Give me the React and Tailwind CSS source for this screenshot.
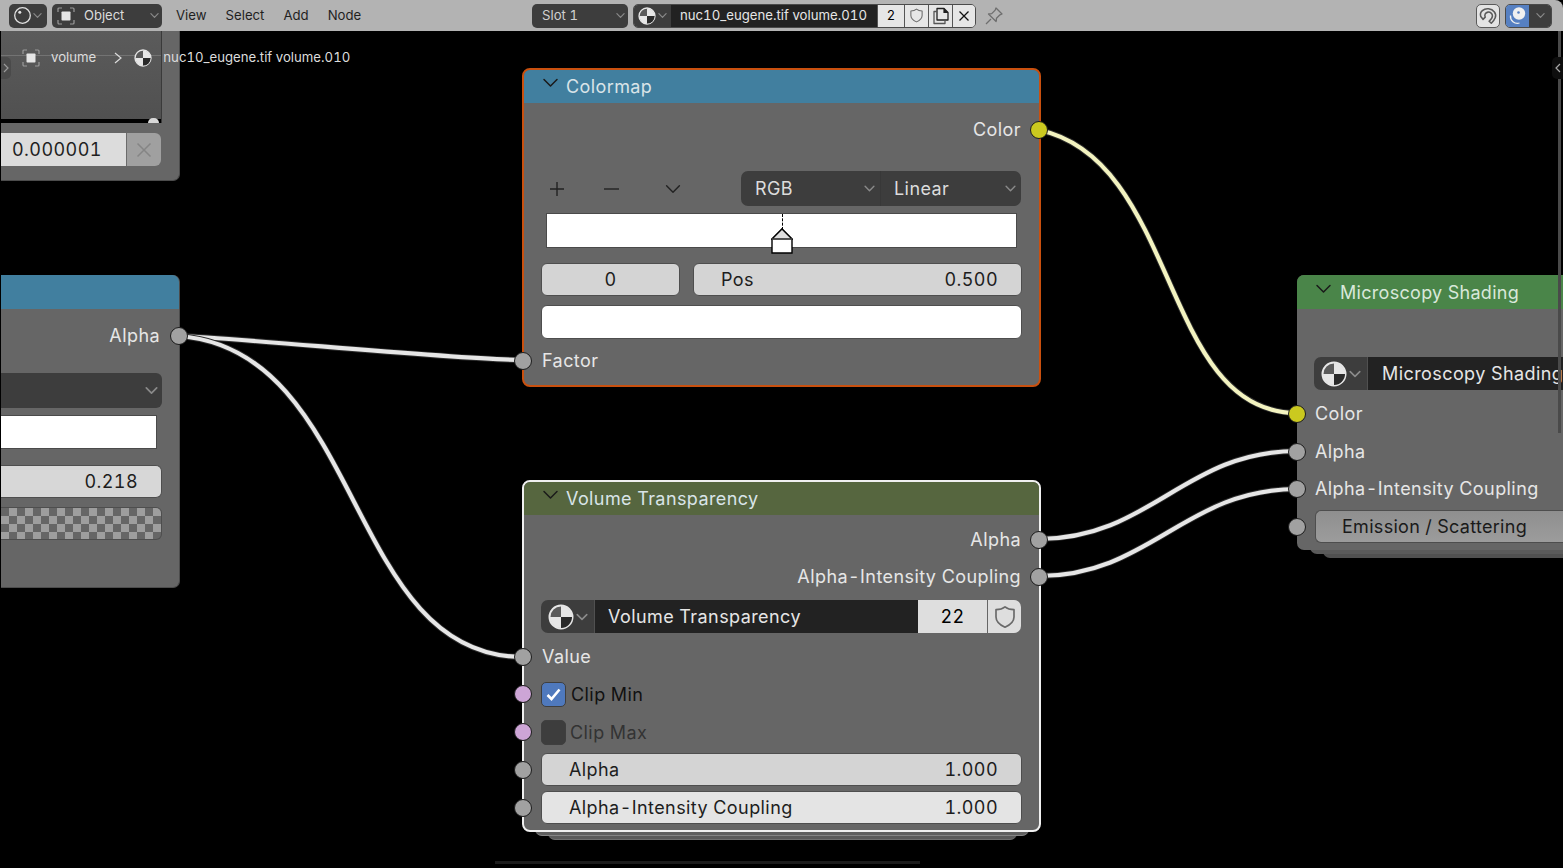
import React from "react";

const font = { fontFamily: "Inter, 'Noto Sans', sans-serif" };

function Chevron({ className = "", size = 10, color = "#8a8a8a", w = 1.3 }) {
  return (
    <svg width={size} height={size} viewBox="0 0 10 10" className={className}>
      <path d="M1 3l4 4 4-4" fill="none" stroke={color} strokeWidth={w} strokeLinecap="round" strokeLinejoin="round" />
    </svg>
  );
}

function MatIcon({ size = 26 }) {
  return (
    <svg width={size} height={size} viewBox="0 0 26 26">
      <circle cx="13" cy="13" r="11.5" fill="#5a5a5a" stroke="#e6e6e6" strokeWidth="2" />
      <path d="M13 13h11A11 11 0 0 1 13 24z" fill="#2a2a2a" />
      <path d="M13 2a11 11 0 0 1 11 11H13z" fill="#e6e6e6" />
      <path d="M13 13v11A11 11 0 0 1 2 13z" fill="#e6e6e6" />
    </svg>
  );
}

function ObjIcon({ size = 18, color = "#e6e6e6", corner = "#9a9a9a" }) {
  return (
    <svg width={size} height={size} viewBox="0 0 18 18">
      <rect x="4.500" y="4.500" width="9" height="9" rx="0.8" fill={color} />
      <path d="M1 5V2a1 1 0 0 1 1-1h3M13 1h3a1 1 0 0 1 1 1v3M17 13v3a1 1 0 0 1-1 1h-3M5 17H2a1 1 0 0 1-1-1v-3" fill="none" stroke={corner} strokeWidth="1.2" />
    </svg>
  );
}

function Shield({ size = 20, color = "#6a6a6a" }) {
  return (
    <svg width={size} height={size} viewBox="0 0 20 20">
      <path d="M10 1.500c2 1.600 4.500 2.300 7.500 2.400v6c0 4-3.200 6.600-7.500 8.600-4.300-2-7.500-4.600-7.500-8.600v-6C5.500 3.800 8 3.100 10 1.500z" fill="none" stroke={color} strokeWidth="1.400" strokeLinejoin="round" />
    </svg>
  );
}

function Socket({ side, color = "#a1a1a1", bordered }) {
  const pos = side === "left" ? (bordered ? "left-[-10px]" : "left-[-9px]") : "right-[-9px]";
  return (
    <span
      className={`absolute ${pos} top-1/2 -translate-y-1/2 w-[18px] h-[18px] rounded-full border-[1.5px] border-[#1c1c1c] z-20`}
      style={{ backgroundColor: color }}
    />
  );
}

function SocketRow({ h, label, side = "left", color, bordered, text = "text-[#e6e6e6]", pl = "pl-[19px]", pr = "pr-[19px]", children }) {
  return (
    <div className={`relative flex items-center ${side === "right" ? `justify-end ${pr}` : pl}`} style={{ height: h }}>
      {side && <Socket side={side} color={color} bordered={bordered} />}
      {children || <span className={`${text} text-[18px] leading-none tracking-[0.42px]`}>{label}</span>}
    </div>
  );
}

function NodeHeader({ title, color, h = "h-[34px]" }) {
  return (
    <div className={`${h} ${color} flex items-center pl-[18px] gap-[7px] rounded-t-[6px] shrink-0`}>
      <svg width="17" height="17" viewBox="0 0 17 17" className="mb-[6px]">
        <path d="M2 4.500l6.500 6.500L15 4.500" fill="none" stroke="#1a1a1a" strokeWidth="1.500" strokeLinecap="round" strokeLinejoin="round" />
      </svg>
      <span className="text-[18px] leading-none text-[#d9e4e8] tracking-[0.4px] whitespace-nowrap">{title}</span>
    </div>
  );
}

function Field({ label, value, className = "", bg = "bg-[#d4d4d4]" }) {
  return (
    <div className={`h-[33px] ${bg} rounded-[6px] border border-[#4e4e4e] flex items-center justify-between pl-[27px] pr-[23px] text-[18px] text-[#1d1d1d] tracking-[0.42px] ${className}`}>
      <span>{label}</span>
      <span>{value}</span>
    </div>
  );
}

function Wires() {
  const wire = (d, col) => (
    <g key={d}>
      <path d={d} fill="none" stroke="#2c2c2c" strokeWidth="6" />
      <path d={d} fill="none" stroke={col} strokeWidth="4.200" />
    </g>
  );
  return (
    <svg className="absolute left-0 top-0 z-0" width="1563" height="868" viewBox="0 0 1563 868">
      {wire("M179 336C 240 338, 460 360, 523 360", "#e6e6e6")}
      {wire("M179 336C 365 350, 345 657, 523 657", "#e6e6e6")}
      {wire("M1039 130C 1180 160, 1160 413, 1297 413", "#f3f3c0")}
      {wire("M1039 539C 1150 539, 1185 451, 1297 451", "#e6e6e6")}
      {wire("M1039 576C 1150 576, 1185 489, 1297 489", "#e6e6e6")}
    </svg>
  );
}

function TopBar() {
  return (
    <header className="relative z-30 h-[31px] bg-[#b3b3b3] flex items-center text-[13px] text-[#1f1f1f] rounded-tr-[8px] pl-[9px]">
      <div className="w-[38px] h-[24px] bg-[#3d3d3d] rounded-[5px] flex items-center pl-[4px] gap-[1px]">
        <svg width="19" height="19" viewBox="0 0 19 19">
          <circle cx="9.500" cy="9.500" r="7.800" fill="none" stroke="#e0e0e0" strokeWidth="1.300" />
          <circle cx="6.800" cy="6.300" r="1.500" fill="#e0e0e0" />
        </svg>
        <Chevron size={9} />
      </div>
      <div className="ml-[5px] w-[110px] h-[24px] bg-[#3d3d3d] rounded-[5px] flex items-center pl-[5px] text-[#dcdcdc]">
        <ObjIcon />
        <span className="ml-[9px] flex-1">Object</span>
        <Chevron size={9} className="mr-[3px]" />
      </div>
      <nav className="ml-[14px] flex gap-[19px] w-[184px] text-[13.200px]">
        <span>View</span>
        <span>Select</span>
        <span>Add</span>
        <span>Node</span>
      </nav>
      <div className="ml-[172px] w-[96px] h-[24px] bg-[#3d3d3d] rounded-[5px] flex items-center pl-[10px] text-[#d0d0d0] text-[13.200px]">
        <span className="flex-1">Slot 1</span>
        <Chevron size={9} className="mr-[3px]" />
      </div>
      <div className="ml-[5px] h-[24px] flex rounded-[5px] overflow-hidden border border-[#4a4a4a]">
        <div className="w-[37px] bg-[#3d3d3d] flex items-center pl-[4px] gap-[2px]">
          <MatIcon size={18} />
          <Chevron size={9} />
        </div>
        <div className="w-[206px] bg-[#222222] text-[#e6e6e6] text-[13.200px] flex items-center pl-[9px] whitespace-nowrap">nuc10_eugene.tif volume.010</div>
        <div className="w-[27px] bg-[#e6e6e6] text-black flex items-center justify-center border-l border-[#555]">2</div>
        <div className="w-[24px] bg-[#e6e6e6] flex items-center justify-center border-l border-[#555]"><Shield size={15} /></div>
        <div className="w-[24px] bg-[#e6e6e6] flex items-center justify-center border-l border-[#555]">
          <svg width="18" height="18" viewBox="0 0 18 18">
            <path d="M5 1.500h7l4 4V13H5z" fill="none" stroke="#1f1f1f" strokeWidth="1.300" strokeLinejoin="round" />
            <path d="M5 4.500H2V16.500H13V13" fill="none" stroke="#555" strokeWidth="1.300" strokeLinejoin="round" />
            <path d="M12 1.500V5.500H16" fill="#1f1f1f" stroke="#1f1f1f" strokeWidth="1.200" />
          </svg>
        </div>
        <div className="w-[23px] bg-[#e6e6e6] flex items-center justify-center border-l border-[#555]">
          <svg width="12" height="12" viewBox="0 0 12 12"><path d="M1.500 1.500l9 9M10.500 1.500l-9 9" stroke="#111" strokeWidth="1.300" /></svg>
        </div>
      </div>
      <div className="ml-[8px] w-[20px] h-[20px] flex items-center justify-center">
        <svg width="20" height="20" viewBox="0 0 20 20">
          <path d="M12 2l6 6-2 .8-3.500 3.500-.4 3.200L8 11.500 4.500 8 7.700 7.600 11.200 4.100z" fill="none" stroke="#6e6e6e" strokeWidth="1.300" strokeLinejoin="round" />
          <path d="M7 13l-5 5" stroke="#6e6e6e" strokeWidth="1.300" />
        </svg>
      </div>
      <div className="ml-auto mr-[11px] flex items-center gap-[5px]">
        <div className="w-[24px] h-[24px] rounded-[5px] bg-[#e3e3e3] border border-[#5a5a5a] flex items-center justify-center">
          <svg width="20" height="20" viewBox="0 0 18 18">
            <path d="M2.500 9.500C1 5 5.500 2 9.500 2.500 14 3 17 7 15.500 10.500c-.8 2-2 3.500-3.500 5l-2-1.800c1.500-1.300 3-3 3-4.700 0-2-1.800-3.800-4-3.500-2.300.3-3.500 2.500-2.500 4.500L4.500 12z" fill="none" stroke="#5a5a5a" strokeWidth="1.400" strokeLinejoin="round" />
          </svg>
        </div>
        <div className="h-[24px] w-[47px] rounded-[5px] overflow-hidden flex border border-[#4a4a4a]">
          <div className="w-[23px] bg-[#5680c2] flex items-center justify-center">
            <svg width="19" height="19" viewBox="0 0 19 19">
              <circle cx="11" cy="7.500" r="6.200" fill="#f0f0f0" />
              <circle cx="10.500" cy="6.500" r="1.300" fill="#5680c2" />
              <path d="M2.500 9.500a7 7 0 0 0 9 7.500" fill="none" stroke="#f0f0f0" strokeWidth="1.300" />
            </svg>
          </div>
          <div className="flex-1 bg-[#3d3d3d] flex items-center justify-center"><Chevron size={9} /></div>
        </div>
      </div>
    </header>
  );
}

function LeftTopNode() {
  return (
    <section className="absolute left-[1px] top-[31px] w-[179px] h-[150px] bg-[#666666] rounded-br-[7px] border-r border-b border-[#4c4c4c] z-10">
      <div className="relative w-[161px] h-[92px] bg-gradient-to-b from-[#5b5b5b] to-[#505050] border-r border-[#3a3a3a]">
        <div className="absolute left-0 right-0 bottom-0 h-[4px] border-t-[3px] border-dotted border-black bg-black" />
        <span className="absolute right-[2px] bottom-0 w-[11px] h-[5px] rounded-t-full bg-[#d8d8d8]" />
        <div className="absolute left-0 right-0 top-[24px] h-px bg-[#737373]" />
        <div className="absolute left-0 top-[26px] w-[10px] h-[22px] bg-[#4a4a4a] rounded-r-[5px] flex items-center justify-center">
          <svg width="6" height="10" viewBox="0 0 6 10"><path d="M1 1l4 4-4 4" fill="none" stroke="#9a9a9a" strokeWidth="1.200" /></svg>
        </div>
      </div>
      <div className="mt-[10px] flex w-[160px] h-[33px] rounded-r-[6px] overflow-hidden text-[18px] tracking-[0.42px]">
        <div className="w-[125px] bg-[#dcdcdc] text-[#1f1f1f] flex items-center pl-[11px]">0.000001</div>
        <div className="flex-1 bg-[#a0a0a0] border-l border-[#6b6b6b] flex items-center justify-center">
          <svg width="16" height="16" viewBox="0 0 16 16"><path d="M1.500 1.500l13 13M14.500 1.500l-13 13" stroke="#858585" strokeWidth="1.500" /></svg>
        </div>
      </div>
    </section>
  );
}

function LeftAlphaNode() {
  return (
    <section className="absolute left-[1px] top-[275px] w-[179px] h-[313px] bg-[#666666] rounded-r-[7px] border-r border-b border-[#4c4c4c] z-10">
      <div className="h-[34px] bg-[#417f9f] rounded-tr-[7px]" />
      <SocketRow h={53} side="right" label="Alpha" pr="pr-[19px]" />
      <div className="relative">
        <div className="w-[161px] h-[35px] mt-[11px] bg-[#3d3d3d] rounded-r-[6px] flex items-center justify-end pr-[4px]">
          <Chevron size={13} />
        </div>
        <div className="w-[156px] h-[34px] mt-[7px] bg-white border border-[#4a4a4a] border-l-0" />
        <div className="w-[161px] h-[33px] mt-[16px] bg-[#d7d7d7] rounded-r-[6px] border border-l-0 border-[#4e4e4e] flex items-center justify-end pr-[23px] text-[18px] text-[#1d1d1d] tracking-[0.42px]">0.218</div>
        <div className="w-[161px] h-[33px] mt-[9px] rounded-r-[6px] border border-l-0 border-[#4e4e4e] bg-[#6a6a6a] bg-[conic-gradient(#9e9e9e_25%,#666666_0_50%,#9e9e9e_0_75%,#666666_0)] bg-[length:16px_16px]" />
      </div>
    </section>
  );
}

function Colormap() {
  return (
    <section className="absolute left-[522px] top-[68px] w-[519px] h-[319px] bg-[#666666] rounded-[8px] border-2 border-[#c9500f] z-10 flex flex-col box-border">
      <NodeHeader title="Colormap" color="bg-[#417f9f]" h="h-[33px]" />
      <SocketRow h={53} side="right" label="Color" color="#cbc91f" pr="pr-[18px]" />
      <div className="mt-[15px] h-[35px] flex items-center pl-[17px] pr-[18px]">
        <div className="flex items-center w-[200px] text-[#1f1f1f]">
          <svg width="16" height="16" viewBox="0 0 16 16" className="ml-[8px]"><path d="M8 1v14M1 8h14" stroke="#222" strokeWidth="1.400" /></svg>
          <svg width="16" height="16" viewBox="0 0 16 16" className="ml-[38px]"><path d="M1 8h15" stroke="#222" strokeWidth="1.400" /></svg>
          <Chevron size={16} color="#222" w={0.9} className="ml-[46px]" />
        </div>
        <div className="ml-auto w-[280px] h-[35px] bg-[#3d3d3d] rounded-[7px] flex text-[18px] text-[#dcdcdc] tracking-[0.42px]">
          <div className="flex-1 flex items-center justify-between pl-[14px] pr-[5px] border-r border-[#383838]">
            <span>RGB</span><Chevron size={11} />
          </div>
          <div className="w-[140px] flex items-center justify-between pl-[13px] pr-[5px]">
            <span>Linear</span><Chevron size={11} />
          </div>
        </div>
      </div>
      <div className="relative mt-[7px] ml-[22px] w-[471px] h-[35px] bg-white border border-[#4a4a4a]">
        <span className="absolute left-[235px] top-0 h-[16px] border-l border-dashed border-black" />
        <svg className="absolute left-[224px] top-[14px]" width="22" height="26" viewBox="0 0 22 26">
          <path d="M11 1L21 11V25H1V11z" fill="#ffffff" stroke="#000" strokeWidth="1.400" />
          <path d="M11 1L21 11H1z" fill="#dedede" stroke="#000" strokeWidth="1.400" />
          <path d="M1 11H21" stroke="#6a6a6a" strokeWidth="1" />
        </svg>
      </div>
      <div className="mt-[15px] pl-[17px] pr-[17px] flex gap-[13px] text-[18px] text-[#1d1d1d] tracking-[0.42px]">
        <div className="w-[139px] h-[33px] bg-[#d4d4d4] rounded-[6px] border border-[#4e4e4e] flex items-center justify-center">0</div>
        <Field label="Pos" value="0.500" className="flex-1" />
      </div>
      <div className="mt-[9px] mx-[17px] h-[34px] bg-white rounded-[6px] border border-[#4e4e4e]" />
      <SocketRow h={43} side="left" bordered label="Factor" pl="pl-[18px]" />
    </section>
  );
}

function Selector({ name, children, className = "", namePad = "pl-[13px]" }) {
  return (
    <div className={`flex h-[33px] rounded-[7px] overflow-hidden text-[18px] tracking-[0.42px] ${className}`}>
      <div className="w-[54px] shrink-0 bg-[#3d3d3d] flex items-center pl-[7px] gap-[2px] border-r border-[#505050]">
        <MatIcon />
        <Chevron size={12} />
      </div>
      <div className={`flex-1 bg-[#222222] text-[#e6e6e6] flex items-center ${namePad} whitespace-nowrap overflow-hidden`}>{name}</div>
      {children}
    </div>
  );
}

function Checkbox({ on }) {
  return (
    <span className={`w-[25px] h-[25px] rounded-[5px] border border-[#3f3f3f] flex items-center justify-center ${on ? "bg-[#4f79bd]" : "bg-[#3d3d3d]"}`}>
      {on && (
        <svg width="17" height="17" viewBox="0 0 17 17"><path d="M2.500 9l4 4L14.500 3.500" fill="none" stroke="#fff" strokeWidth="2.600" /></svg>
      )}
    </span>
  );
}

function VolumeTransparency() {
  return (
    <>
      <div className="absolute left-[535px] top-[820px] w-[494px] h-[16px] bg-[#5f5f5f] rounded-b-[7px] border-b border-[#858585] z-[5]" />
      <div className="absolute left-[548px] top-[825px] w-[469px] h-[15px] bg-[#5b5b5b] rounded-b-[7px] border-b border-[#707070] z-[4]" />
      <section className="absolute left-[522px] top-[480px] w-[519px] h-[352px] bg-[#666666] rounded-[8px] border-2 border-[#f0f0f0] z-10 flex flex-col">
        <NodeHeader title="Volume Transparency" color="bg-[#56663f]" h="h-[33px]" />
        <div className="pt-[6px]">
          <SocketRow h={37} side="right" label="Alpha" pr="pr-[18px]" />
          <SocketRow h={37} side="right" label="Alpha-Intensity Coupling" pr="pr-[18px]" />
        </div>
        <div className="pl-[17px] pr-[18px] mt-[5px]">
          <Selector name="Volume Transparency">
            <div className="w-[69px] bg-[#dedede] text-black flex items-center justify-center">22</div>
            <div className="w-[34px] bg-[#dedede] border-l border-[#666] flex items-center justify-center"><Shield size={24} /></div>
          </Selector>
        </div>
        <SocketRow h={48} side="left" bordered label="Value" pl="pl-[18px]" />
        <SocketRow h={26} side="left" bordered color="#cda5d6" pl="pl-[17px]">
          <span className="flex items-center gap-[5px] text-[18px] text-[#111] tracking-[0.42px]"><Checkbox on /><span>Clip Min</span></span>
        </SocketRow>
        <div className="h-[12px]" />
        <SocketRow h={26} side="left" bordered color="#cda5d6" pl="pl-[17px]">
          <span className="flex items-center gap-[4px] text-[18px] text-[#333] tracking-[0.42px]"><Checkbox /><span>Clip Max</span></span>
        </SocketRow>
        <div className="h-[8px]" />
        <SocketRow h={33} side="left" bordered pl="pl-[17px]">
          <Field label="Alpha" value="1.000" className="w-[481px]" />
        </SocketRow>
        <div className="h-[5px]" />
        <SocketRow h={33} side="left" bordered pl="pl-[17px]">
          <Field label="Alpha-Intensity Coupling" value="1.000" className="w-[481px]" bg="bg-[#e4e4e4]" />
        </SocketRow>
      </section>
    </>
  );
}

function Microscopy() {
  return (
    <>
      <div className="absolute left-[1310px] top-[540px] w-[253px] h-[14px] bg-[#5a5a5a] rounded-bl-[7px] z-[5]" />
      <div className="absolute left-[1323px] top-[545px] w-[240px] h-[13px] bg-[#505050] rounded-bl-[7px] z-[4]" />
      <section className="absolute left-[1297px] top-[275px] w-[266px] h-[275px] bg-[#666666] rounded-l-[7px] z-10 flex flex-col">
        <div className="h-[34px] bg-[#4a8549] rounded-tl-[7px] flex items-center pt-[2px] pl-[18px] gap-[8px]">
          <svg width="17" height="17" viewBox="0 0 17 17" className="mb-[8px]"><path d="M2 4.500l6.500 6.500L15 4.500" fill="none" stroke="#1a1a1a" strokeWidth="1.500" strokeLinecap="round" strokeLinejoin="round" /></svg>
          <span className="text-[18px] leading-none text-[#d9e8da] tracking-[0.3px] whitespace-nowrap">Microscopy Shading</span>
        </div>
        <div className="mt-[48px] pl-[17px]">
          <Selector name="Microscopy Shading" className="rounded-r-none" namePad="pl-[14px]" />
        </div>
        <SocketRow h={47} side="left" label="Color" color="#cbc91f" pl="pl-[18px]" />
        <SocketRow h={30} side="left" label="Alpha" pl="pl-[18px]" />
        <div className="h-[7px]" />
        <SocketRow h={30} side="left" label="Alpha-Intensity Coupling" pl="pl-[18px]" />
        <div className="h-[6px]" />
        <SocketRow h={33} side="left" pl="pl-[18px]">
          <div className="w-[250px] h-[33px] bg-gradient-to-b from-[#8f8f8f] to-[#9c9c9c] rounded-l-[6px] border border-r-0 border-[#4e4e4e] flex items-center pl-[26px] text-[18px] text-[#1a1a1a] tracking-[0.3px] whitespace-nowrap">
            Emission / Scattering
          </div>
        </SocketRow>
      </section>
    </>
  );
}

function Breadcrumb() {
  return (
    <div className="absolute left-[22px] top-[48px] z-20 flex items-center h-[19px] text-[13.200px] text-[#dcdcdc] whitespace-nowrap">
      <ObjIcon />
      <span className="ml-[11px]">volume</span>
      <svg width="8" height="12" viewBox="0 0 8 12" className="ml-[18px]"><path d="M1 1l6 5-6 5" fill="none" stroke="#dcdcdc" strokeWidth="1.200" /></svg>
      <span className="ml-[12px]"><MatIcon size={18} /></span>
      <span className="ml-[11px]">nuc10_eugene.tif volume.010</span>
    </div>
  );
}

export default function App() {
  return (
    <div className="relative w-[1563px] h-[868px] overflow-hidden bg-black tabular-nums" style={font}>
      <TopBar />
      <Wires />
      <LeftTopNode />
      <LeftAlphaNode />
      <Colormap />
      <VolumeTransparency />
      <Microscopy />
      <Breadcrumb />
      <div className="absolute left-[495px] top-[861px] w-[425px] h-[3px] bg-[#1d1d1d] z-20" />
      <div className="absolute right-[2px] top-[31px] w-[3px] h-[402px] bg-[#4a4a4a] z-20" />
      <div className="absolute right-0 top-[57px] w-[11px] h-[22px] bg-[#0e0e0e] rounded-l-[5px] z-20 flex items-center justify-center">
        <svg width="6" height="10" viewBox="0 0 6 10"><path d="M5 1L1 5l4 4" fill="none" stroke="#a8a8a8" strokeWidth="1.200" /></svg>
      </div>
    </div>
  );
}
